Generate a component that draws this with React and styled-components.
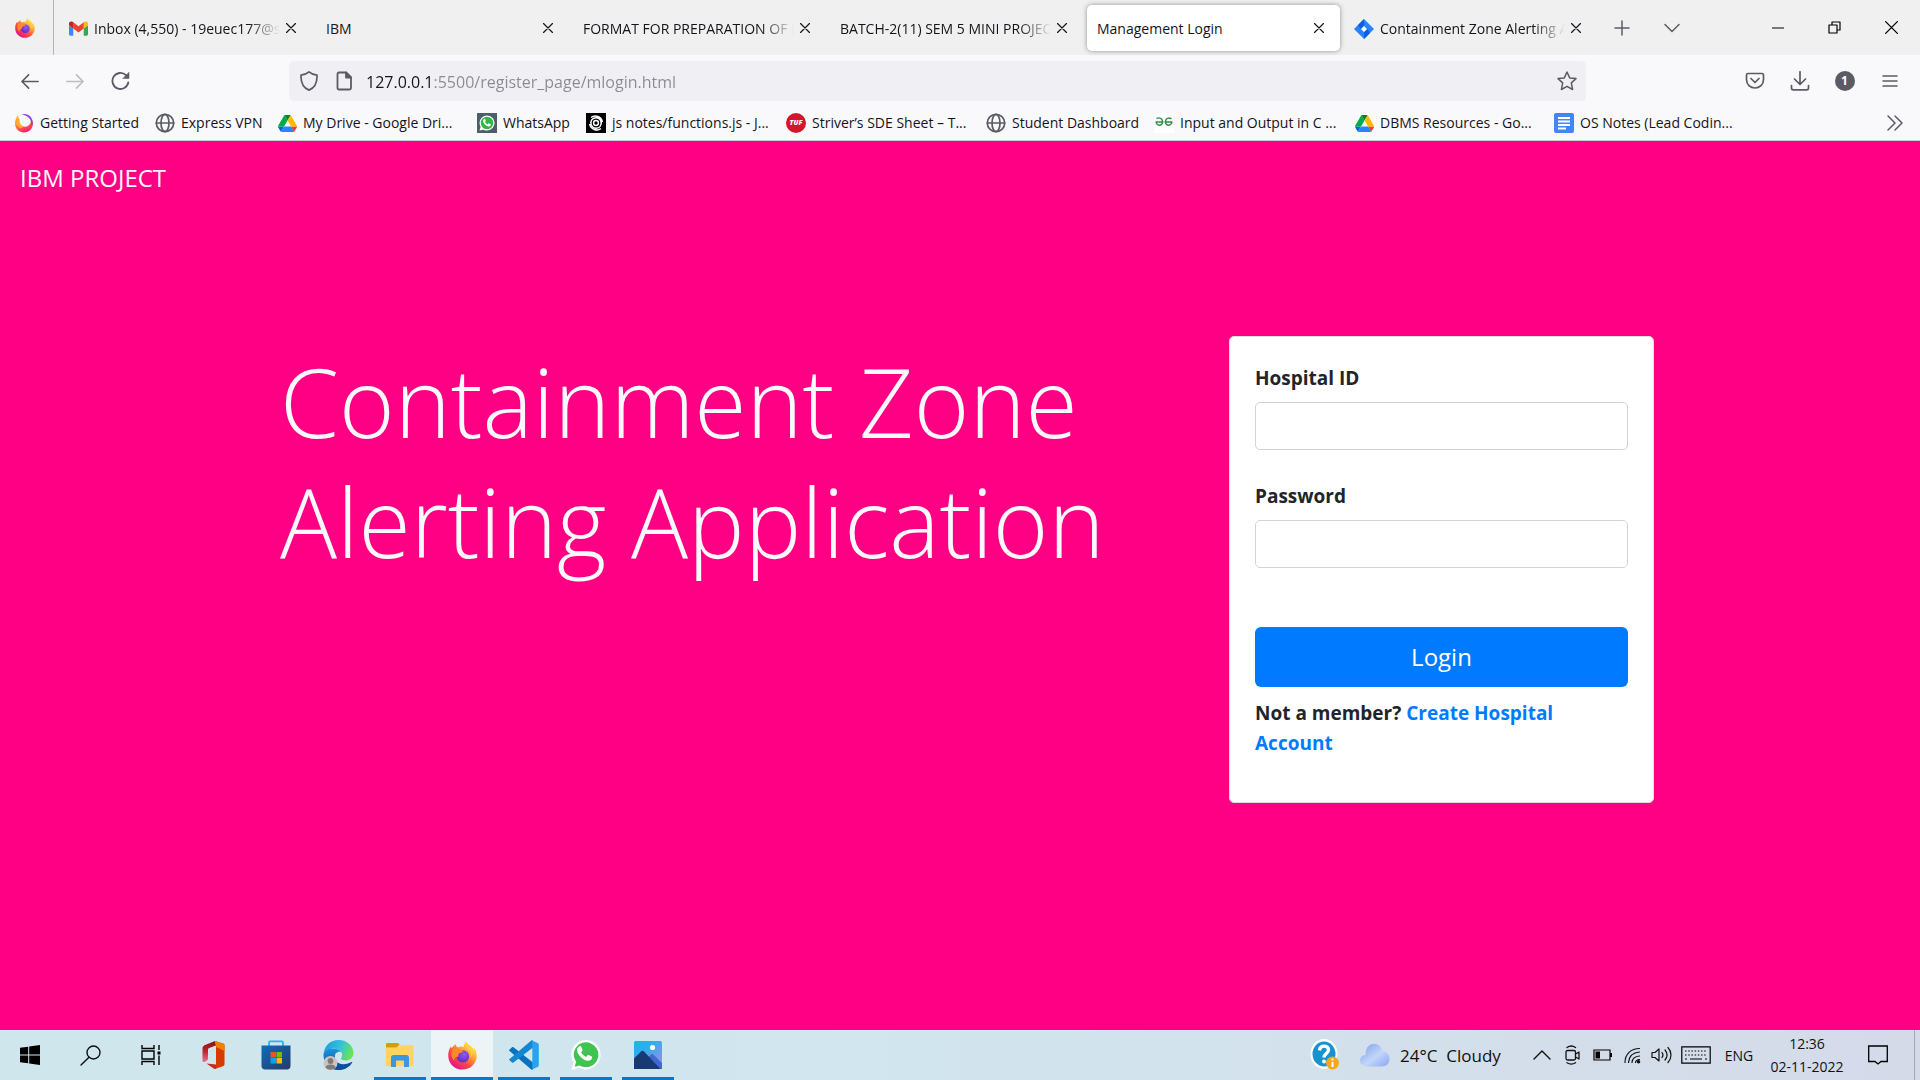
import React, { useId } from "react";
import styled, { createGlobalStyle } from "styled-components";

const GlobalStyle = createGlobalStyle`
  *, *::before, *::after { box-sizing: border-box; }
  body {
    margin: 0;
    font-family: "Open Sans", "Noto Sans", sans-serif;
    color: #15141a;
  }
  button, input { font: inherit; color: inherit; }
  button { border: 0; padding: 0; background: none; cursor: pointer; }
  a { color: inherit; text-decoration: none; }
  svg { display: block; flex: none; }
`;

const Screen = styled.div`
  display: flex;
  flex-direction: column;
  min-height: 100vh;
`;

/* ---------- browser chrome ---------- */

const TabStrip = styled.div`
  display: flex;
  align-items: center;
  height: 55px;
  background: #f0f0f0;
`;

const PinnedArea = styled.div`
  display: flex;
  align-items: center;
  justify-content: center;
  align-self: stretch;
  width: 54px;
  padding-right: 4px;
  border-right: 1px solid #b4b4b6;
`;

const Tabs = styled.div`
  display: flex;
  flex: 0 1 1543px;
  min-width: 0;
  gap: 4px;
  padding-left: 5px;
`;

const Tab = styled.div`
  display: flex;
  align-items: center;
  flex: 0 1 253px;
  min-width: 0;
  height: 46px;
  padding: 0 10px;
  border-radius: 5px;
  background: ${(p) => (p.$active ? "#ffffff" : "transparent")};
  box-shadow: ${(p) => (p.$active ? "0 0 5px rgba(0, 0, 0, 0.4)" : "none")};
`;

const TabTitle = styled.button`
  display: flex;
  align-items: center;
  gap: 6px;
  flex: 1;
  min-width: 0;
  height: 46px;
  padding-top: 2px;
  overflow: hidden;
  white-space: nowrap;
  font-size: 14px;
  line-height: 20px;
  mask-image: ${(p) =>
    p.$fade ? "linear-gradient(to left, transparent 0, #000 32px)" : "none"};
`;

const IconButton = styled.button`
  display: flex;
  align-items: center;
  justify-content: center;
  flex: none;
  width: ${(p) => p.$w || 45}px;
  height: ${(p) => p.$h || 40}px;
  color: ${(p) => p.$color || "#5b5b66"};
`;

const WindowControls = styled.div`
  display: flex;
  margin-left: auto;
`;

const NavBar = styled.div`
  display: flex;
  align-items: center;
  height: 50px;
  padding: 2px 8px 0;
  background: #f9f9fb;
`;

const NavGroup = styled.div`
  display: flex;
  flex: 0 0 auto;
`;

const Spring = styled.div`
  flex: 0 0 146px;
`;

const UrlBar = styled.div`
  display: flex;
  align-items: center;
  flex: 1;
  min-width: 0;
  height: 40px;
  padding: 0 2px;
  border-radius: 5px;
  background: #f0f0f4;
`;

const UrlInput = styled.input`
  flex: 1;
  min-width: 0;
  height: 40px;
  padding: 2px 0 0 5px;
  border: 0;
  outline: 0;
  font-size: 16px;
  background: linear-gradient(to right, #15141a 70px, #8b8a92 70px);
  background-clip: text;
  color: transparent;
`;

const BookmarksBar = styled.nav`
  display: flex;
  align-items: center;
  height: 36px;
  padding: 1px 10px 0 14px;
  background: #f9f9fb;
  border-bottom: 1px solid #cccccc;
`;

const Bookmark = styled.a`
  display: flex;
  align-items: center;
  gap: 6px;
  flex: 0 0 ${(p) => p.$w}px;
  white-space: nowrap;
  font-size: 14px;
  line-height: 20px;
`;

const BookmarkIcon = styled.span`
  display: flex;
  justify-content: center;
  width: 20px;
  color: #5b5b66;
`;

const MoreBookmarks = styled(IconButton)`
  margin-left: auto;
`;

/* ---------- web page ---------- */

const Page = styled.main`
  flex: 1;
  background: #ff0084;
  color: #f8f9fa;
`;

const PageHeader = styled.header`
  padding: 19px 20px;
  font-size: 24px;
  line-height: 36px;
`;

const Hero = styled.div`
  display: flex;
  align-items: flex-start;
  max-width: 1424px;
  margin: 0 auto;
  padding: 121px 18px 0;
`;

const Title = styled.h1`
  flex: 1;
  margin: 0;
  padding: 5px 14px;
  font-size: 95px;
  font-weight: 300;
  line-height: 120px;
`;

const Card = styled.form`
  flex: 0 0 425px;
  padding: 25px;
  border: 1px solid #dfdfdf;
  border-radius: 5px;
  background: #ffffff;
  color: #212529;
  font-size: 19px;
  font-weight: 700;
  line-height: 30px;
`;

const Field = styled.div`
  display: flex;
  flex-direction: column;
  gap: 8px;
  margin-bottom: 30px;
`;

const FieldLabel = styled.label`
  line-height: 32px;
`;

const TextInput = styled.input`
  width: 100%;
  height: 48px;
  padding: 8px 15px;
  border: 1px solid #ced4da;
  border-radius: 5px;
  background: #ffffff;
  font-weight: 400;
`;

const LoginButton = styled.button`
  width: 100%;
  height: 60px;
  margin: 29px 0 11px;
  border-radius: 6px;
  background: #007bff;
  color: #ffffff;
  font-size: 24px;
  font-weight: 400;
`;

const SignUp = styled.p`
  margin: 0 0 19px;
  a { color: #007bff; }
`;

/* ---------- taskbar ---------- */

const TaskBar = styled.footer`
  display: flex;
  height: 50px;
  background: linear-gradient(to right, #cfe6ed, #d1e6ee 45%, #d3dfeb 75%, #d5dae9);
  color: #111111;
`;

const Task = styled.button`
  position: relative;
  display: flex;
  align-items: center;
  justify-content: center;
  flex: none;
  width: ${(p) => p.$w || 62}px;
  height: 50px;
  background: ${(p) => (p.$focused ? "#ecf4f8" : "transparent")};
  &::after {
    content: "";
    position: absolute;
    bottom: 0;
    left: ${(p) => (p.$focused ? 0 : 5)}px;
    right: ${(p) => (p.$focused ? 0 : 5)}px;
    height: ${(p) => (p.$running ? 3 : 0)}px;
    background: #0078d7;
  }
`;

const Tray = styled.div`
  display: flex;
  align-items: center;
  margin-left: auto;
`;

const Weather = styled.button`
  display: flex;
  align-items: center;
  gap: 10px;
  width: 170px;
  padding-left: 10px;
  font-size: 17px;
  white-space: pre;
`;

const Language = styled.button`
  width: 48px;
  height: 50px;
  padding-left: 6px;
  font-size: 14px;
`;

const Clock = styled.button`
  width: 94px;
  height: 50px;
  font-size: 14px;
  line-height: 23px;
`;

const DesktopEdge = styled.button`
  width: 6px;
  height: 50px;
  margin-left: 12px;
  border-left: 1px solid #a3a9b5;
`;

/* ---------- icons ---------- */

const Line = ({ w = 20, h = w, box = "0 0 20 20", sw = 1.5, children }) => (
  <svg width={w} height={h} viewBox={box} fill="none" stroke="currentColor"
    strokeWidth={sw} strokeLinecap="round" strokeLinejoin="round" aria-hidden="true">
    {children}
  </svg>
);

const CloseIcon = ({ size = 10, sw = 1.2 }) => (
  <Line w={size} box="0 0 10 10" sw={sw}><path d="M.5.5l9 9M9.500.5l-9 9" /></Line>
);
const PlusIcon = () => <Line w={16} box="0 0 16 16"><path d="M8 1v14M1 8h14" /></Line>;
const ChevronIcon = () => <Line w={16} box="0 0 16 16"><path d="M1 4.500l7 7 7-7" /></Line>;
const ArrowIcon = ({ flip }) => (
  <Line w={19} sw={1.700}>
    {flip ? <path d="M1 10h17M11 3l7 7-7 7" /> : <path d="M18 10H1M8 3l-7 7 7 7" />}
  </Line>
);
const ReloadIcon = () => (
  <Line w={20} sw={1.800}>
    <path d="M17.300 11.500A8 8 0 1 1 15 4.200" />
    <path d="M18 1.500v6h-6z" fill="currentColor" strokeWidth=".5" />
  </Line>
);
const ShieldIcon = () => (
  <Line w={20} sw={1.700}><path d="M10 .9c2 1.800 4.800 2.900 8 3.200.3 6.500-1.800 12.400-8 15-6.200-2.600-8.300-8.500-8-15C5.200 3.800 8 2.700 10 .9z" /></Line>
);
const PageIcon = () => (
  <Line w={16} h={20} box="0 0 16 20" sw={1.800}>
    <path d="M3 1.500h7l5 5V17a1.500 1.500 0 0 1-1.500 1.500H3A1.500 1.500 0 0 1 1.500 17V3A1.500 1.500 0 0 1 3 1.500z" />
    <path d="M10 1.500v5h5z" fill="currentColor" />
  </Line>
);
const StarIcon = () => (
  <Line w={20}><path d="M10 1l2.700 5.900 6.300.7-4.700 4.300 1.300 6.600L10 15.300l-5.600 3.200 1.300-6.600L1 7.600l6.300-.7z" /></Line>
);
const PocketIcon = () => (
  <Line w={20} sw={1.700}>
    <path d="M3 2.500h14c1 0 1.500.6 1.500 1.500v4.500c0 5-3.800 8.500-8.500 8.500s-8.500-3.500-8.500-8.500V4c0-.9.500-1.500 1.500-1.500z" />
    <path d="M6 7.500l4 4 4-4" />
  </Line>
);
const DownloadIcon = () => (
  <Line w={20} sw={1.700}>
    <path d="M10 .8v12M4.500 8l5.500 5.500L15.500 8M1.500 14.500V17c0 1 .8 1.800 1.800 1.800h13.400c1 0 1.800-.8 1.800-1.800v-2.500" />
  </Line>
);
const MenuIcon = () => <Line w={16} box="0 0 16 16"><path d="M1 3h14M1 8h14M1 13h14" /></Line>;
const DoubleChevronIcon = () => (
  <Line w={18} h={16} box="0 0 18 16"><path d="M2 1l7 7-7 7M9 1l7 7-7 7" /></Line>
);
const GlobeIcon = () => (
  <Line w={20} sw={1.700}>
    <circle cx="10" cy="10" r="8.700" />
    <ellipse cx="10" cy="10" rx="4" ry="8.700" />
    <path d="M1.300 10h17.400" />
  </Line>
);
const MinimizeIcon = () => <Line w={12} box="0 0 12 12" sw={1.200}><path d="M0 6h12" /></Line>;
const RestoreIcon = () => (
  <Line w={13} box="0 0 13 13" sw={1.200}>
    <path d="M1 4h8v8H1zM4 4V1h8v8H9" />
  </Line>
);

const AccountBadge = styled.span`
  width: 20px;
  height: 20px;
  border-radius: 10px;
  background: #5b5b66;
  color: #ffffff;
  font-size: 12px;
  font-weight: 700;
  line-height: 20px;
`;

function FirefoxIcon({ size = 20 }) {
  const id = useId();
  return (
    <svg width={size} height={size} viewBox="0 0 32 32" aria-hidden="true">
      <defs>
        <linearGradient id={`${id}a`} x1=".85" y1=".1" x2=".2" y2=".9">
          <stop offset="0" stopColor="#fff44f" />
          <stop offset=".35" stopColor="#ffa436" />
          <stop offset=".65" stopColor="#ff4a45" />
          <stop offset="1" stopColor="#e31587" />
        </linearGradient>
        <radialGradient id={`${id}b`} cx=".6" cy=".35" r=".7">
          <stop offset="0" stopColor="#9059ff" />
          <stop offset="1" stopColor="#5b2bb8" />
        </radialGradient>
      </defs>
      <path fill={`url(#${id}a)`} d="M20 .5c-2 2-2.600 4-2.500 6-2-.8-4.600-.7-6.500.5C9.600 6.500 8.700 5.200 8.800 3.500 6.500 4.700 5 6.200 4.200 8 3.700 7.600 3.500 6.600 3.600 5.500 1.200 8.800 0 12.500.3 17 .8 25.500 7.700 31.500 16 31.500S31.500 25 31.700 17c.1-4-1-7.500-3.200-10 .2 1.200.3 2-.1 2.800C27 5.500 21 4 20 .5z" />
      <circle cx="16.500" cy="17" r="6.800" fill={`url(#${id}b)`} />
      <path fill="#ff8a2a" d="M5 9.500c3-1.500 5.500-1 7 .3 1.500-.3 3.500 0 5 1.200-1 1.800-3.200 2-4.500 2.600-1.200.6-1.500 2-.5 3.400-3-.2-5.500 2-5 5-3-3-4.500-8-2-12.500z" />
      <path fill="#ffd43a" d="M20 1c-1.500 3 .5 5 3 7.500 2.600 2.800 3.200 6 2 9.500 3-3 3.800-7.500 1.500-11C24.500 4.500 21 4 20 1z" />
    </svg>
  );
}

const FirefoxRingIcon = () => {
  const id = useId();
  return (
    <svg width="20" height="20" viewBox="0 0 20 20" aria-hidden="true">
      <defs>
        <linearGradient id={id} x1=".2" y1="0" x2=".6" y2="1">
          <stop offset="0" stopColor="#ffc42e" />
          <stop offset=".45" stopColor="#ff8a35" />
          <stop offset=".75" stopColor="#ff4a4f" />
          <stop offset="1" stopColor="#f0197d" />
        </linearGradient>
      </defs>
      <path fill={`url(#${id})`} d="M4 2C2 4.500 1 7 1 10.500 1 15.500 5 19.500 10 19.500s9-4 9-9c0-1.500-.3-3-1-4.300L10 13 5 8z" />
      <circle cx="11" cy="8" r="5.800" fill="#f9f9fb" />
      <path d="M7.500 1.400c6-2 11.500 2 11.300 9.600-.2 1-1 1.600-1.800 1 1.200-5.200-2.800-9.800-9.500-10.600z" fill="#8548ea" />
      <path d="M4 2c-.3 2.200.3 3.300 1.600 4.500-.5 3 1 6.200 4.400 7.200L6 15.500 2 11z" fill="#ffae2c" />
    </svg>
  );
};

const GmailIcon = () => (
  <svg width="19" height="15" viewBox="0 0 20 15" aria-hidden="true">
    <path fill="#4285f4" d="M1.500 15h3V7.500L0 4.200v9.300C0 14.300.7 15 1.500 15z" />
    <path fill="#34a853" d="M15.500 15h3c.8 0 1.500-.7 1.500-1.500V4.200l-4.500 3.300z" />
    <path fill="#fbbc04" d="M15.500 1v6.500L20 4.200V2.300C20 .4 17.800-.6 16.400.5z" />
    <path fill="#ea4335" d="M4.500 7.500V1L10 5l5.500-4v6.500L10 11.600z" />
    <path fill="#c5221f" d="M0 2.300v1.900l4.500 3.300V1L3.600.5C2.200-.6 0 .4 0 2.300z" />
  </svg>
);
const DriveIcon = () => (
  <svg width="19" height="17" viewBox="0 0 87 78" aria-hidden="true">
    <path fill="#0066da" d="M6.600 66.900l3.900 6.600c.8 1.400 1.900 2.500 3.300 3.300L27.500 53H0c0 1.600.4 3.100 1.200 4.500z" />
    <path fill="#00ac47" d="M43.700 25L29.900 1.200c-1.400.8-2.500 1.900-3.300 3.300l-25.400 44A9 9 0 0 0 0 53h27.500z" />
    <path fill="#ea4335" d="M73.600 76.800c1.400-.8 2.500-1.900 3.300-3.300l9.200-16c.8-1.400 1.200-3 1.200-4.500H59.800l5.900 11.500z" />
    <path fill="#00832d" d="M43.700 25L57.400 1.200C56 .4 54.500 0 52.900 0H34.400c-1.600 0-3.200.4-4.500 1.200z" />
    <path fill="#2684fc" d="M59.800 53H27.500L13.800 76.800c1.400.8 2.900 1.200 4.500 1.200h50.800c1.600 0 3.200-.4 4.500-1.200z" />
    <path fill="#ffba00" d="M73.400 26.500L60.700 4.500c-.8-1.400-1.900-2.500-3.300-3.300L43.700 25l16.100 28h27.500c0-1.600-.4-3.100-1.200-4.500z" />
  </svg>
);
const PHONE = "M10.300 8.800c.5-.6 1-.9 1.500-.8.600 0 .9.200 1.200.9l1.200 2.900c.2.500.1.900-.2 1.300l-1.200 1.500c1.200 2.300 3 4 5.400 5l1.500-1.800c.3-.4.700-.5 1.100-.3l3 1.400c.6.300.8.6.7 1.200-.2 2.300-2.200 3.600-4.300 3.500-5.400-.5-11.200-6.200-11.700-11-.1-1.700.7-2.900 1.800-3.800z";
const WhatsAppSquareIcon = () => (
  <svg width="20" height="20" viewBox="0 0 32 32" aria-hidden="true">
    <path fill="#4a5f69" d="M0 0h32v32H0z" />
    <path fill="#fff" d="M16 4a12 12 0 1 1-5.600 22.600L4 28l1.700-6.100A12 12 0 0 1 16 4z" />
    <circle cx="16" cy="16" r="10" fill="#2fb944" />
    <g transform="translate(3 3) scale(.78)"><path fill="#fff" d={PHONE} /></g>
  </svg>
);
const SwirlIcon = () => (
  <svg width="20" height="20" viewBox="0 0 20 20" fill="none" stroke="#fff" strokeWidth="1.500" aria-hidden="true">
    <path fill="#000" stroke="none" d="M0 0h20v20H0z" />
    <circle cx="10" cy="10" r="2.400" />
    <path d="M5 4.500c4-3 10.500-1 11.300 4.500M15 15.500c-4 3-10.500 1-11.300-4.500M5.200 12c-1.500-4 1.200-7.200 5-7.200 3.500 0 5.600 3 4.800 6.200M14.800 8" />
    <path d="M5.200 12c.8 2 2.600 3.200 4.800 3.200 2.800 0 4.800-2 5-4.200" />
  </svg>
);
const TufIcon = styled.span`
  width: 20px;
  height: 20px;
  border-radius: 10px;
  background: #d6152c;
  color: #ffffff;
  font-size: 7px;
  font-weight: 800;
  font-style: italic;
  line-height: 20px;
  text-align: center;
`;
const GeeksIcon = () => (
  <svg width="20" height="20" viewBox="0 0 20 20" fill="none" stroke="#2f8d46" strokeWidth="1.400" aria-hidden="true">
    <path fill="#fff" stroke="none" d="M0 0h20v20H0z" />
    <path d="M2.500 5.500c3-1.500 6-.2 6 3.300 0 4-5 4.800-6.300 1V9h7.300M17.500 5.800c-3-1.700-6-.5-6 3 0 4 5 4.800 6.300 1V9h-7.300" />
  </svg>
);
const DocsIcon = () => (
  <svg width="20" height="20" viewBox="0 0 20 20" aria-hidden="true">
    <rect width="20" height="20" rx="2" fill="#4285f4" />
    <path stroke="#fff" strokeWidth="2" d="M4 5h12M4 8.500h12M4 12h12M4 15.500h8" />
  </svg>
);
const JiraIcon = () => (
  <svg width="20" height="20" viewBox="0 0 20 20" aria-hidden="true">
    <path fill="#2684ff" d="M10 0l10 10-10 10L0 10z" />
    <path fill="#0f5fdc" d="M10 0v6.500L6.500 10 4 6zM10 20v-6.500l3.500-3.500L16 14z" />
    <path fill="#fff" d="M10 7l3 3-3 3-3-3z" />
  </svg>
);

const WindowsIcon = () => (
  <svg width="20" height="20" viewBox="0 0 20 20" fill="#000" aria-hidden="true">
    <path d="M0 2.800l8.200-1.100v7.800H0zM9.200 1.500L20 0v9.500H9.200zM0 10.500h8.200v7.800L0 17.200zM9.200 10.500H20V20L9.200 18.500z" />
  </svg>
);
const SearchIcon = () => (
  <Line w={21} box="0 0 21 21" sw={1.400}><circle cx="13.500" cy="7.500" r="6.500" /><path d="M9 12.200L1 20" /></Line>
);
const TaskViewIcon = () => (
  <svg width="20" height="20" viewBox="0 0 20 20" fill="none" stroke="#000" strokeWidth="1.400" aria-hidden="true">
    <path d="M1 0v3.500h12V0M1 20v-3.500h12V20M1 6h12v8H1zM18 0v5M18 10.500V20" />
    <path strokeWidth="3" d="M18 6.500v3" />
  </svg>
);
const OfficeIcon = () => {
  const id = useId();
  return (
    <svg width="23" height="28" viewBox="0 0 23 28" aria-hidden="true">
      <defs>
        <linearGradient id={id} x1="0" y1="0" x2="0" y2="1">
          <stop offset="0" stopColor="#8e0f12" />
          <stop offset=".5" stopColor="#c3252c" />
          <stop offset="1" stopColor="#e8729b" />
        </linearGradient>
      </defs>
      <path fill={`url(#${id})`} d="M13 0L2.500 4.200C1 5 .5 6 .5 7.500v12c0 1.500 1.500 2 2.500 1.300l2-1.300c1-.7 1-1.500 1-2.500V9c0-1 .5-1.500 1.300-1.900L14 4.500z" />
      <path fill="#c52a24" d="M4.500 22.500L14 23.500V28c-.8.200-1.500 0-2.300-.4z" />
      <path fill="#d83b01" d="M13 0l8 2.500c1 .4 1.500 1 1.500 2V23c0 1.200-.6 2-1.700 2.300L13 28c.8-.5 1-1 1-2V2c0-.8-.3-1.500-1-2z" />
      <path fill="#f08000" d="M13 0l8 2.500c1 .4 1.500 1 1.500 2V10L14 6V2c0-.8-.3-1.500-1-2z" />
    </svg>
  );
};
const StoreIcon = () => {
  const id = useId();
  return (
    <svg width="30" height="30" viewBox="0 0 30 30" aria-hidden="true">
      <defs>
        <linearGradient id={id} x1="0" y1="0" x2="1" y2="1">
          <stop offset="0" stopColor="#0f6cbd" />
          <stop offset="1" stopColor="#263a66" />
        </linearGradient>
      </defs>
      <path fill="none" stroke="#28b5ea" strokeWidth="1.800" d="M8 6V2.500c0-.8.400-1.200 1.200-1.200h11.600c.8 0 1.200.4 1.200 1.200V6" />
      <path fill={`url(#${id})`} d="M.5 5.500h29V26c0 2-1.500 3.500-3.500 3.500H4C2 29.500.5 28 .5 26z" />
      <path fill="#f25022" d="M9.500 12H15v5.500H9.500z" />
      <path fill="#7fba00" d="M15.500 12H21v5.500h-5.500z" />
      <path fill="#00a4ef" d="M9.500 18H15v5.500H9.500z" />
      <path fill="#ffb900" d="M15.500 18H21v5.500h-5.500z" />
    </svg>
  );
};
const EdgeIcon = () => {
  const id = useId();
  return (
    <svg width="31" height="30" viewBox="0 0 31 30" aria-hidden="true">
      <defs>
        <linearGradient id={`${id}a`} x1="0" y1=".3" x2="1" y2=".6">
          <stop offset="0" stopColor="#1b9de2" />
          <stop offset=".5" stopColor="#33c1dd" />
          <stop offset="1" stopColor="#6be84a" />
        </linearGradient>
        <linearGradient id={`${id}b`} x1="0" y1="0" x2="0" y2="1">
          <stop offset="0" stopColor="#1c94dc" />
          <stop offset="1" stopColor="#0c4ea2" />
        </linearGradient>
      </defs>
      <path fill={`url(#${id}a)`} d="M.6 13.500C1.800 5 8 0 15.500 0 24.500 0 30.500 6.500 30.500 13c0 4.500-3.500 7.500-7.500 7.500-3 0-5-1-5-2 0-.8 1.200-1.500 1.200-3.500 0-3.500-4-6.500-9-6.500-5 0-8.500 2.500-9.600 5z" />
      <path fill={`url(#${id}b)`} d="M.6 13.500C1.700 10.500 5 8.500 9.500 8.500c4 0 7 1.500 8.500 3.500-4-1-7 2-6.500 6.500.5 5 5 8.500 10.500 8.500-2 1.800-4.500 3-7.500 3C7 30-.5 22 .6 13.500z" />
      <path fill="#0d4f9e" d="M12 14.500c-1.500 5 2 9.500 8 9.700 3.500.1 6.500-1.200 8.500-2.200.6-.3 1 .2.600.8C26 28 20 30.500 15 30c-4-1.500-6.500-11-3-15.500z" />
      <circle cx="7.500" cy="23" r="7" fill="#c9c5c1" />
      <circle cx="7.500" cy="21" r="2.900" fill="#807b78" />
      <path fill="#807b78" d="M2.500 27.500c0-4 10-4 10 0-2.500 3-7.500 3-10 0z" />
    </svg>
  );
};
const ExplorerIcon = () => (
  <svg width="28" height="24" viewBox="0 0 28 24" aria-hidden="true">
    <path fill="#dc9a05" d="M0 1.500C0 .5.500 0 1.500 0h10c.8 0 1.200.5 2 1.500L11 5H0z" />
    <path fill="#ffd464" d="M0 4.500h10.500L13 2.200h13c1 0 1.500.5 1.500 1.500V22c0 .8-.5 1.300-1.500 1.300H1.500C.5 23.300 0 22.800 0 22z" />
    <path fill="#3b98dc" d="M5 24V14.500c0-1.500 1-2.500 2.500-2.500h13c1.500 0 2.500 1 2.500 2.500V24h-5v-5.500c0-.8-.5-1-1-1h-6c-.5 0-1 .2-1 1V24z" />
  </svg>
);
const CodeIcon = () => (
  <svg width="30" height="30" viewBox="0 0 30 30" aria-hidden="true">
    <path fill="#0a72bd" d="M.5 9.500L3 7.300c.6-.4 1-.3 1.500 0L24 22.500V29c0 1-1 1-1.700.4L.6 11C0 10.500 0 10 .5 9.500z" />
    <path fill="#1587cf" d="M.5 20.200L3 22.500c.6.4 1 .3 1.500 0L24 7.500V1c0-1-1-1-1.700-.4L.6 19C0 19.500 0 19.800.5 20.200z" />
    <path fill="#29a3ef" d="M22 30l6.500-3c.9-.4 1.300-1 1.300-2V5c0-1-.4-1.600-1.300-2L22 0c1 .5 1.300 1 1.300 2v26c0 1-.3 1.500-1.300 2z" />
  </svg>
);
const WhatsAppIcon = () => (
  <svg width="30" height="30" viewBox="0 0 32 32" aria-hidden="true">
    <path fill="#fff" d="M16 0a15.700 15.700 0 1 1-7.300 29.700L.5 32l2.200-8.200A15.700 15.700 0 0 1 16 0z" />
    <path fill="#3fc351" d="M16 2.500a13.200 13.200 0 1 1-6.700 24.600L4 28.500l1.400-5.200A13.200 13.200 0 0 1 16 2.500z" />
    <g transform="translate(-2 -1.500)"><path fill="#fff" d={PHONE} /></g>
  </svg>
);
const PhotosIcon = () => {
  const id = useId();
  return (
    <svg width="28" height="28" viewBox="0 0 28 28" aria-hidden="true">
      <defs>
        <linearGradient id={id} x1="0" y1="0" x2="1" y2="1">
          <stop offset=".3" stopColor="#28b0ea" />
          <stop offset="1" stopColor="#a98be0" />
        </linearGradient>
      </defs>
      <rect width="28" height="28" rx="1.500" fill={`url(#${id})`} />
      <path fill="#4168cf" d="M13 18l4-4.500c.7-.7 1.500-.7 2.200 0L28 22v6H13z" />
      <path fill="#173a75" d="M0 17.500l7-7c1-.9 2-.9 3 0L26.500 28H0z" />
      <circle cx="18.500" cy="6.500" r="2.600" fill="#fff" />
    </svg>
  );
};
const HelpIcon = () => (
  <svg width="30" height="32" viewBox="0 0 30 32" aria-hidden="true">
    <ellipse cx="14" cy="15" rx="13.500" ry="15" fill="#fff" />
    <ellipse cx="14" cy="15" rx="11.500" ry="12.500" fill="#1793cf" />
    <path fill="none" stroke="#fff" strokeWidth="3.400" d="M9.500 11.500c.5-6 9-5.500 9-.5 0 3.500-4.500 3.500-4.500 7.500" />
    <circle cx="14" cy="22.500" r="2" fill="#fff" />
    <circle cx="22.500" cy="24" r="6.500" fill="#f5a81c" />
    <path stroke="#fff" strokeWidth="2" d="M22.500 23v5M22.500 19.500v2" />
  </svg>
);
const CloudIcon = () => {
  const id = useId();
  return (
    <svg width="30" height="24" viewBox="0 0 30 24" aria-hidden="true">
      <defs>
        <linearGradient id={id} x1="0" y1="0" x2="1" y2="1">
          <stop offset="0" stopColor="#7c9fe6" />
          <stop offset=".55" stopColor="#c3d5fa" />
          <stop offset="1" stopColor="#86a9f0" />
        </linearGradient>
      </defs>
      <path fill={`url(#${id})`} d="M7 23.500c-9 0-9-11-1.500-11.500C5.500 5 9 .8 14 .8c5 0 7.500 3.200 8 7.200 9.500 0 10.500 15.500 0 15.500z" />
    </svg>
  );
};
const TrayChevronIcon = () => (
  <Line w={18} box="0 0 18 18" sw={1.400}><path d="M1 13l8-8 8 8" /></Line>
);
const MeetIcon = () => (
  <Line w={18} h={20} box="0 0 18 20" sw={1.300}>
    <rect x="2" y="5.500" width="9.500" height="9.500" rx="1.500" />
    <path d="M11.500 9l3.500-2v7l-3.500-2M3 2.500c2.500-1.800 6-1.800 8.500 0M3 17.700c2.500 1.600 6 1.600 8.500 0" />
  </Line>
);
const BatteryIcon = () => (
  <svg width="19" height="12" viewBox="0 0 19 12" fill="none" stroke="#000" strokeWidth="1.200" aria-hidden="true">
    <path d="M1 1h16v10H1z" />
    <path fill="#000" stroke="none" d="M2.500 2.500H7v7H2.500zM17 4h2v4h-2z" />
  </svg>
);
const WifiIcon = () => (
  <Line w={17} box="0 0 17 17" sw={1.200}>
    <path d="M1 15.500C1 7 7 1.500 15.500 1.500M4.500 15.500C5 9.500 9 5.500 15.500 5M8 15.500c.3-3.500 3-6.200 7.500-6.500M11.500 15.500c.2-1.500 1.500-3 4-3" />
    <circle cx="14.500" cy="14.800" r="1.200" fill="currentColor" />
  </Line>
);
const VolumeIcon = () => (
  <Line w={21} h={18} box="0 0 21 18" sw={1.200}>
    <path d="M1 6.500h3L8 3v12l-4-3.500H1zM11 6.500c1.200 1.500 1.200 3.500 0 5M14 4c2.500 3 2.500 7 0 10M17 1.500c4 4.500 4 10.500 0 15" />
  </Line>
);
const KeyboardIcon = () => (
  <svg width="30" height="18" viewBox="0 0 30 18" fill="none" stroke="#000" strokeWidth="1.200" aria-hidden="true">
    <path d="M.8.800h28.400v16.400H.8z" />
    <path strokeDasharray="1.500 1.700" d="M4 5h22M4 9h22" />
    <path d="M4 13h2M9 13h12M24 13h2" />
  </svg>
);
const NotificationIcon = () => (
  <svg width="20" height="20" viewBox="0 0 20 20" fill="none" stroke="#000" strokeWidth="1.300" aria-hidden="true">
    <path d="M.7 1h18.600v15.500H13L10 19l-3-2.500H.7z" />
  </svg>
);

/* ---------- data ---------- */

const TABS = [
  { title: "Inbox (4,550) - 19euec177@s", icon: <GmailIcon />, fade: true },
  { title: "IBM" },
  { title: "FORMAT FOR PREPARATION OF I", fade: true },
  { title: "BATCH-2(11) SEM 5 MINI PROJEC", fade: true },
  { title: "Management Login", active: true },
  { title: "Containment Zone Alerting A", icon: <JiraIcon />, fade: true },
];

const BOOKMARKS = [
  { label: "Getting Started", icon: <FirefoxRingIcon />, w: 141 },
  { label: "Express VPN", icon: <GlobeIcon />, w: 122 },
  { label: "My Drive - Google Dri...", icon: <DriveIcon />, w: 200 },
  { label: "WhatsApp", icon: <WhatsAppSquareIcon />, w: 109 },
  { label: "js notes/functions.js - J...", icon: <SwirlIcon />, w: 200 },
  { label: "Striver’s SDE Sheet – T...", icon: <TufIcon>TUF</TufIcon>, w: 200 },
  { label: "Student Dashboard", icon: <GlobeIcon />, w: 168 },
  { label: "Input and Output in C ...", icon: <GeeksIcon />, w: 200 },
  { label: "DBMS Resources - Go...", icon: <DriveIcon />, w: 200 },
  { label: "OS Notes (Lead Codin...", icon: <DocsIcon />, w: 200 },
];

const TASKS = [
  { name: "Start", icon: <WindowsIcon />, w: 60 },
  { name: "Search", icon: <SearchIcon />, w: 60 },
  { name: "Task View", icon: <TaskViewIcon /> },
  { name: "Office", icon: <OfficeIcon /> },
  { name: "Microsoft Store", icon: <StoreIcon />, w: 63 },
  { name: "Microsoft Edge", icon: <EdgeIcon /> },
  { name: "File Explorer", icon: <ExplorerIcon />, running: true },
  { name: "Firefox", icon: <FirefoxIcon size={29} />, running: true, focused: true },
  { name: "Visual Studio Code", icon: <CodeIcon />, running: true },
  { name: "WhatsApp", icon: <WhatsAppIcon />, running: true },
  { name: "Photos", icon: <PhotosIcon />, running: true },
];

function BrowserChrome() {
  return (
    <header>
      <TabStrip>
        <PinnedArea><FirefoxIcon /></PinnedArea>
        <Tabs>
          {TABS.map((t) => (
            <Tab key={t.title} $active={t.active}>
              <TabTitle type="button" $fade={t.fade}>
                {t.icon}
                <span>{t.title}</span>
              </TabTitle>
              <IconButton type="button" $w={22} $color="#15141a" aria-label={`Close ${t.title}`}>
                <CloseIcon />
              </IconButton>
            </Tab>
          ))}
        </Tabs>
        <IconButton type="button" $w={50} aria-label="New tab"><PlusIcon /></IconButton>
        <IconButton type="button" $w={50} aria-label="List all tabs"><ChevronIcon /></IconButton>
        <WindowControls>
          <IconButton type="button" $w={57} $color="#000" aria-label="Minimize"><MinimizeIcon /></IconButton>
          <IconButton type="button" $w={57} $color="#000" aria-label="Restore"><RestoreIcon /></IconButton>
          <IconButton type="button" $w={57} $color="#000" aria-label="Close"><CloseIcon size={13} sw={1} /></IconButton>
        </WindowControls>
      </TabStrip>
      <NavBar>
        <NavGroup>
          <IconButton type="button" aria-label="Back"><ArrowIcon /></IconButton>
          <IconButton type="button" $color="#bdbdc2" aria-label="Forward"><ArrowIcon flip /></IconButton>
          <IconButton type="button" aria-label="Reload"><ReloadIcon /></IconButton>
        </NavGroup>
        <Spring />
        <UrlBar>
          <IconButton type="button" $w={35} aria-label="Tracking protection"><ShieldIcon /></IconButton>
          <IconButton type="button" $w={35} aria-label="Site information"><PageIcon /></IconButton>
          <UrlInput type="text" aria-label="Address" defaultValue="127.0.0.1:5500/register_page/mlogin.html" />
          <IconButton type="button" $w={35} aria-label="Bookmark this page"><StarIcon /></IconButton>
        </UrlBar>
        <Spring />
        <NavGroup>
          <IconButton type="button" aria-label="Pocket"><PocketIcon /></IconButton>
          <IconButton type="button" aria-label="Downloads"><DownloadIcon /></IconButton>
          <IconButton type="button" aria-label="Account"><AccountBadge>1</AccountBadge></IconButton>
          <IconButton type="button" aria-label="Menu"><MenuIcon /></IconButton>
        </NavGroup>
      </NavBar>
      <BookmarksBar>
        {BOOKMARKS.map((b) => (
          <Bookmark key={b.label} href="#" $w={b.w}>
            <BookmarkIcon>{b.icon}</BookmarkIcon>
            {b.label}
          </Bookmark>
        ))}
        <MoreBookmarks type="button" $w={30} $h={30} aria-label="More bookmarks">
          <DoubleChevronIcon />
        </MoreBookmarks>
      </BookmarksBar>
    </header>
  );
}

function LoginPage() {
  return (
    <Page>
      <PageHeader><a href="#">IBM PROJECT</a></PageHeader>
      <Hero>
        <Title>Containment Zone Alerting Application</Title>
        <Card onSubmit={(e) => e.preventDefault()}>
          <Field>
            <FieldLabel htmlFor="hospital-id">Hospital ID</FieldLabel>
            <TextInput id="hospital-id" type="text" />
          </Field>
          <Field>
            <FieldLabel htmlFor="password">Password</FieldLabel>
            <TextInput id="password" type="password" />
          </Field>
          <LoginButton type="submit">Login</LoginButton>
          <SignUp>Not a member? <a href="#">Create Hospital Account</a></SignUp>
        </Card>
      </Hero>
    </Page>
  );
}

function WindowsTaskBar() {
  return (
    <TaskBar>
      {TASKS.map((t) => (
        <Task key={t.name} type="button" aria-label={t.name} $w={t.w} $running={t.running} $focused={t.focused}>
          {t.icon}
        </Task>
      ))}
      <Tray>
        <IconButton type="button" $w={50} aria-label="Help"><HelpIcon /></IconButton>
        <Weather type="button"><CloudIcon />{"24°C  Cloudy"}</Weather>
        <IconButton type="button" $w={44} $color="#111" aria-label="Show hidden icons"><TrayChevronIcon /></IconButton>
        <IconButton type="button" $w={18} $color="#111" aria-label="Meet Now"><MeetIcon /></IconButton>
        <IconButton type="button" $w={40} $color="#111" aria-label="Battery"><BatteryIcon /></IconButton>
        <IconButton type="button" $w={20} $color="#111" aria-label="Network"><WifiIcon /></IconButton>
        <IconButton type="button" $w={38} $color="#111" aria-label="Volume"><VolumeIcon /></IconButton>
        <IconButton type="button" $w={32} $color="#111" aria-label="Touch keyboard"><KeyboardIcon /></IconButton>
        <Language type="button">ENG</Language>
        <Clock type="button">12:36<br />02-11-2022</Clock>
        <IconButton type="button" $w={48} $color="#111" aria-label="Notifications"><NotificationIcon /></IconButton>
        <DesktopEdge type="button" aria-label="Show desktop" />
      </Tray>
    </TaskBar>
  );
}

export default function App() {
  return (
    <Screen>
      <GlobalStyle />
      <BrowserChrome />
      <LoginPage />
      <WindowsTaskBar />
    </Screen>
  );
}
